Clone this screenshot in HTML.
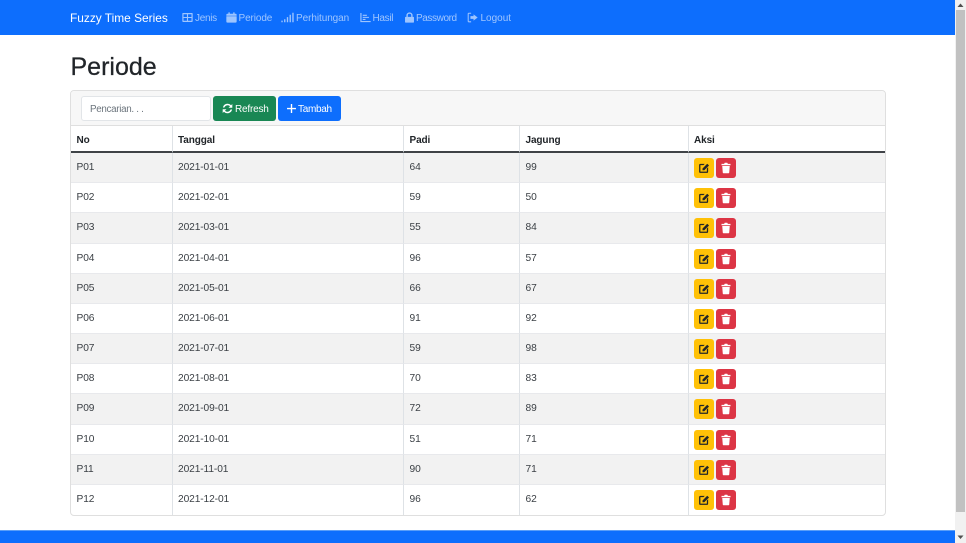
<!DOCTYPE html>
<html lang="id"><head><meta charset="utf-8"><title>Periode</title>
<style>
*{box-sizing:border-box}
html,body{margin:0;padding:0;width:966px;height:543px;overflow:hidden;background:#fff}
body{font-family:"Liberation Sans",Arial,sans-serif;color:#212529;font-size:11px;position:relative}
.abs{position:absolute}
#nav{left:0;top:0;width:955px;height:35px;background:#0d6efd}
#brand{left:70px;top:0;line-height:37px;font-size:11.9px;color:#fff;white-space:nowrap}
.n{position:absolute;top:0;line-height:37px;font-size:10px;color:rgba(255,255,255,.6);white-space:nowrap}
.ni{position:absolute;top:12px;width:11px;height:11px;fill:rgba(255,255,255,.6);stroke:none}
#h{left:70.500px;top:49.500px;font-size:25px;line-height:34px;font-weight:400;margin:0;color:#212529;-webkit-text-stroke:.25px #212529}
#card{left:70px;top:90px;width:816px;height:426px;border:1px solid #dfdfdf;border-radius:4px;background:#fff}
#head{left:71px;top:91px;width:814px;height:35px;background:#f7f7f7;border-bottom:1px solid #dfdfdf;border-radius:4px 4px 0 0}
#inp{left:81px;top:96px;width:130px;height:25px;background:#fff;border:1px solid #e2e5e8;border-radius:3px;font-size:9.800px;letter-spacing:-.3px;color:#6c757d;line-height:25px;padding-left:8px}
.btn{position:absolute;top:96px;height:25px;border-radius:3px;color:#fff;font-size:10px;line-height:27px;white-space:nowrap}
table{position:absolute;left:71px;top:126px;width:814px;border-collapse:separate;border-spacing:0;table-layout:fixed;font-size:10.200px;letter-spacing:-.1px}
th,td{border-right:1px solid #dee2e6;padding:0 0 0 5.500px;text-align:left;vertical-align:top;overflow:hidden}
th:last-child,td:last-child{border-right:0}
th{height:27px;padding-top:4px;line-height:21px;font-weight:700;font-size:10px;border-bottom:2px solid #3f4347}
td{height:30.180px;padding-top:2px;line-height:26px;color:#3a3f44;border-bottom:1px solid #e8e9ec}
td:last-child{padding-top:0}
tr:last-child td{border-bottom:0}
tbody tr:nth-child(odd) td{background:#f2f2f2}
td i{display:inline-block;width:20px;height:20px;border-radius:3px;vertical-align:top;margin-top:5px;position:relative}
td i.e{background:#ffc107;margin-right:2px}
td i.d{background:#dc3545}
td svg{position:absolute;left:4px;top:4px;width:12px;height:12px}
#foot{left:0;top:530px;width:955px;height:13px;background:#0d6efd;border-top:1px solid #5a9ef8}
#track{left:955px;top:0;width:11px;height:543px;background:#f1f1f1}
#thumb{left:956px;top:10px;width:9px;height:502px;background:#c1c1c1}
</style></head><body>

<svg width="0" height="0" style="position:absolute"><defs>
<symbol id="ed" viewBox="0 0 16 16"><path d="M1.500 4.200A1.700 1.700 0 0 1 3.200 2.500H9L7.300 4.200H3.200V12.800H11.800V8.700L13.500 7V12.800A1.700 1.700 0 0 1 11.800 14.500H3.200A1.700 1.700 0 0 1 1.500 12.800Z" fill="#212529"/><path d="M6 8.600 12.300 2.300 14.700 4.700 8.400 11H6Z" fill="#212529"/></symbol>
<symbol id="tr" viewBox="0 0 16 16"><path d="M2 2.500H5.500L6.300 1H9.700L10.500 2.500H14V4.300H2ZM3 5.300H13L12.300 14.200A1 1 0 0 1 11.300 15H4.700A1 1 0 0 1 3.700 14.200Z" fill="#fff"/></symbol>
</defs></svg>

<div id="nav" class="abs"></div>
<div id="brand" class="abs">Fuzzy Time Series</div>

<svg class="ni" style="left:182px" viewBox="0 0 16 16"><path fill-rule="evenodd" d="M1.500 1.500H14.500A1 1 0 0 1 15.500 2.500V13.500A1 1 0 0 1 14.500 14.500H1.500A1 1 0 0 1 .5 13.500V2.500A1 1 0 0 1 1.500 1.500ZM2.200 3.200V7.200H7.200V3.200ZM8.800 3.200V7.200H13.800V3.200ZM2.200 8.800V12.800H7.200V8.800ZM8.800 8.800V12.800H13.800V8.800Z"/></svg>
<div class="n" style="left:195px;letter-spacing:-.3px">Jenis</div>

<svg class="ni" style="left:226px" viewBox="0 0 16 16"><path d="M3.500 .5H5.500V2.500H10.500V.5H12.500V2.500H14A1.500 1.500 0 0 1 15.500 4V5.500H.5V4A1.500 1.500 0 0 1 2 2.500H3.500ZM.5 6.200H15.500V14A1.500 1.500 0 0 1 14 15.500H2A1.500 1.500 0 0 1 .5 14Z"/></svg>
<div class="n" style="left:238.500px;letter-spacing:-.1px">Periode</div>

<svg class="ni" style="left:281px;width:13px" viewBox="0 0 19 16"><path d="M.5 12.500H2.500V15H.5ZM4.500 10.500H6.500V15H4.500ZM8.500 7.500H10.500V15H8.500ZM12.500 4H14.500V15H12.500ZM16.500 1H18.500V15H16.500Z"/></svg>
<div class="n" style="left:296px;letter-spacing:-.07px">Perhitungan</div>

<svg class="ni" style="left:360px" viewBox="0 0 16 16"><path d="M.5 1.500H2.200V13H15.500V14.800H.5ZM4 4H10V5.600H4ZM4 7H13V8.600H4ZM4 10H8V11.600H4Z"/></svg>
<div class="n" style="left:372.500px;letter-spacing:-.3px">Hasil</div>

<svg class="ni" style="left:404px" viewBox="0 0 16 16"><path fill-rule="evenodd" d="M8 .5A4.500 4.500 0 0 1 12.500 5V7H13.500A1 1 0 0 1 14.500 8V14.500A1 1 0 0 1 13.500 15.500H2.500A1 1 0 0 1 1.500 14.500V8A1 1 0 0 1 2.500 7H3.500V5A4.500 4.500 0 0 1 8 .5ZM8 2.500A2.500 2.500 0 0 0 5.500 5V7H10.500V5A2.500 2.500 0 0 0 8 2.500Z"/></svg>
<div class="n" style="left:416px;letter-spacing:-.4px">Password</div>

<svg class="ni" style="left:467px" viewBox="0 0 16 16"><path d="M6 2.500H2.500V13.500H6V15H2.500A1.500 1.500 0 0 1 1 13.500V2.500A1.500 1.500 0 0 1 2.500 1H6ZM9.500 3.500 15.500 8 9.500 12.500V10H5V6H9.500Z"/></svg>
<div class="n" style="left:480.500px">Logout</div>

<h1 id="h" class="abs">Periode</h1>
<div id="card" class="abs"></div>
<div id="head" class="abs"></div>
<div id="inp" class="abs">Pencarian. . .</div>

<div class="btn" style="left:213px;width:63px;background:#198754;padding-left:22px;letter-spacing:-.2px">Refresh
<svg style="position:absolute;left:8.500px;top:7px;width:11px;height:11px" viewBox="0 0 16 16"><path d="M13.200 3.300A7 7 0 0 0 1.300 6.500H3.500A5 5 0 0 1 11.700 4.700L9.500 6.900H15V1.400ZM2.800 12.700A7 7 0 0 0 14.700 9.500H12.500A5 5 0 0 1 4.300 11.300L6.500 9.100H1V14.600Z" fill="#fff"/></svg></div>
<div class="btn" style="left:278px;width:63px;background:#0d6efd;padding-left:20px;letter-spacing:-.3px">Tambah
<svg style="position:absolute;left:7.500px;top:7px;width:11px;height:11px" viewBox="0 0 16 16"><path d="M7 1.500H9V7H14.500V9H9V14.500H7V9H1.500V7H7Z" fill="#fff"/></svg></div>

<table><colgroup><col style="width:101.500px"><col style="width:231.500px"><col style="width:116px"><col style="width:168.500px"><col></colgroup>
<thead><tr><th>No</th><th>Tanggal</th><th>Padi</th><th>Jagung</th><th>Aksi</th></tr></thead>
<tbody>
<tr><td>P01</td><td>2021-01-01</td><td>64</td><td>99</td><td><i class="e"><svg><use href="#ed"/></svg></i><i class="d"><svg><use href="#tr"/></svg></i></td></tr>
<tr><td>P02</td><td>2021-02-01</td><td>59</td><td>50</td><td><i class="e"><svg><use href="#ed"/></svg></i><i class="d"><svg><use href="#tr"/></svg></i></td></tr>
<tr><td>P03</td><td>2021-03-01</td><td>55</td><td>84</td><td><i class="e"><svg><use href="#ed"/></svg></i><i class="d"><svg><use href="#tr"/></svg></i></td></tr>
<tr><td>P04</td><td>2021-04-01</td><td>96</td><td>57</td><td><i class="e"><svg><use href="#ed"/></svg></i><i class="d"><svg><use href="#tr"/></svg></i></td></tr>
<tr><td>P05</td><td>2021-05-01</td><td>66</td><td>67</td><td><i class="e"><svg><use href="#ed"/></svg></i><i class="d"><svg><use href="#tr"/></svg></i></td></tr>
<tr><td>P06</td><td>2021-06-01</td><td>91</td><td>92</td><td><i class="e"><svg><use href="#ed"/></svg></i><i class="d"><svg><use href="#tr"/></svg></i></td></tr>
<tr><td>P07</td><td>2021-07-01</td><td>59</td><td>98</td><td><i class="e"><svg><use href="#ed"/></svg></i><i class="d"><svg><use href="#tr"/></svg></i></td></tr>
<tr><td>P08</td><td>2021-08-01</td><td>70</td><td>83</td><td><i class="e"><svg><use href="#ed"/></svg></i><i class="d"><svg><use href="#tr"/></svg></i></td></tr>
<tr><td>P09</td><td>2021-09-01</td><td>72</td><td>89</td><td><i class="e"><svg><use href="#ed"/></svg></i><i class="d"><svg><use href="#tr"/></svg></i></td></tr>
<tr><td>P10</td><td>2021-10-01</td><td>51</td><td>71</td><td><i class="e"><svg><use href="#ed"/></svg></i><i class="d"><svg><use href="#tr"/></svg></i></td></tr>
<tr><td>P11</td><td>2021-11-01</td><td>90</td><td>71</td><td><i class="e"><svg><use href="#ed"/></svg></i><i class="d"><svg><use href="#tr"/></svg></i></td></tr>
<tr><td>P12</td><td>2021-12-01</td><td>96</td><td>62</td><td><i class="e"><svg><use href="#ed"/></svg></i><i class="d"><svg><use href="#tr"/></svg></i></td></tr>
</tbody></table>

<div id="foot" class="abs"></div>
<div id="track" class="abs"></div>
<div id="thumb" class="abs"></div>
<svg class="abs" style="left:955px;top:0;width:11px;height:543px"><path d="M5.500 3.500 8.500 7H2.500Z" fill="#505050"/><path d="M5.500 539 8.500 535.500H2.500Z" fill="#505050"/></svg>
</body></html>
